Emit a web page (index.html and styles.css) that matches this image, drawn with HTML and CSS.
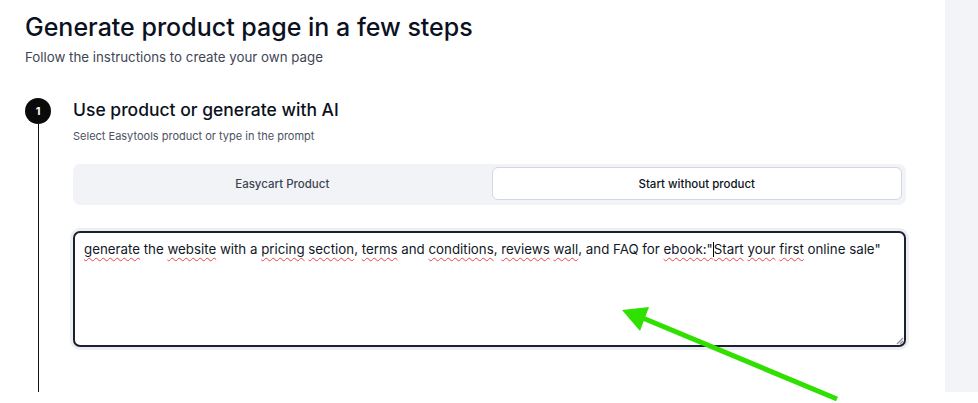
FILE: index.html
```html
<!DOCTYPE html>
<html lang="en">
<head>
<meta charset="utf-8">
<title>Generate product page</title>
<link rel="stylesheet" href="styles.css">
</head>
<body>
<div class="page">
  <main class="main">
    <h1 class="title">Generate product page in a few steps</h1>
    <p class="subtitle">Follow the instructions to create your own page</p>
    <section class="step">
      <div class="rail">
        <div class="badge">1</div>
        <div class="line"></div>
      </div>
      <div class="step-body">
        <h2 class="step-title">Use product or generate with AI</h2>
        <p class="step-sub">Select Easytools product or type in the prompt</p>
        <div class="tabs">
          <div class="tab">Easycart Product</div>
          <div class="tab active">Start without product</div>
        </div>
        <div class="prompt">
          <div class="prompt-text"><span class="sp">generate</span> the <span class="sp">website</span> with a <span class="sp">pricing</span> <span class="sp">section</span>, <span class="sp">terms</span> and <span class="sp">conditions</span>, <span class="sp">reviews</span> <span class="sp">wall</span>, and FAQ for <span class="sp">ebook:"</span><span class="caret"></span><span class="sp">Start</span> <span class="sp">your</span> <span class="sp">first</span> online sale"</div>
          <svg class="grip" width="10" height="10" viewBox="0 0 10 10"><path d="M9 3 L3 9 M9 6 L6 9" stroke="#8a8f98" stroke-width="1.2" fill="none"/></svg>
        </div>
      </div>
    </section>
  </main>
  <aside class="side"></aside>
</div>
<svg class="arrow" width="978" height="403" viewBox="0 0 978 403">
  <line x1="837" y1="399" x2="638" y2="316" stroke="#2fe000" stroke-width="5" stroke-linecap="butt"/>
  <polygon points="622,310 649,307 640,331" fill="#2fe000"/>
</svg>
</body>
</html>
```

FILE: styles.css
```css
* { box-sizing: border-box; }
html, body { margin: 0; padding: 0; background: #ffffff; }
body {
  font-family: Inter, "Noto Sans", sans-serif;
  color: #0d1321;
  width: 978px;
  height: 403px;
  overflow: hidden;
  position: relative;
}
.page {
  display: flex;
  height: 392px;
}
.main {
  flex: 1;
  display: flex;
  flex-direction: column;
  padding: 11px 39px 0 25px;
}
.title {
  margin: 0;
  font-size: 25px;
  line-height: 32px;
  font-weight: 500;
  color: #0b1120;
}
.subtitle {
  margin: 5px 0 0 0;
  font-size: 13.3px;
  line-height: 18px;
  color: #3f4654;
}
.step {
  flex: 1;
  display: flex;
  margin-top: 32px;
}
.rail {
  width: 48px;
  display: flex;
  flex-direction: column;
  align-items: flex-start;
}
.badge {
  width: 26px;
  height: 26px;
  border-radius: 50%;
  background: #0a0a0a;
  color: #ffffff;
  font-size: 11px;
  font-weight: 700;
  display: flex;
  align-items: center;
  justify-content: center;
}
.line {
  flex: 1;
  width: 1px;
  background: #111111;
  margin-left: 13px;
}
.step-body {
  flex: 1;
  display: flex;
  flex-direction: column;
}
.step-title {
  margin: 1px 0 0 0;
  font-size: 17.5px;
  line-height: 22px;
  font-weight: 500;
  color: #0b1120;
}
.step-sub {
  margin: 8px 0 0 0;
  font-size: 11px;
  line-height: 14px;
  color: #4b5261;
}
.tabs {
  margin-top: 21px;
  display: grid;
  grid-template-columns: 1fr 1fr;
  gap: 4px;
  padding: 3px 4px 5px 4px;
  background: #f2f3f7;
  border-radius: 7px;
}
.tab {
  height: 33px;
  display: flex;
  align-items: center;
  justify-content: center;
  font-size: 11.5px;
  font-weight: 500;
  color: #3d4452;
  border-radius: 6px;
  border: 1px solid transparent;
}
.tab.active {
  background: #ffffff;
  border-color: #d3d7e0;
  color: #0d1321;
}
.prompt {
  position: relative;
  margin-top: 26px;
  height: 116px;
  border: 2px solid #1c2130;
  border-radius: 7px;
  box-shadow: 0 0 0 3px #eceef2;
  padding: 7px 9px;
  background: #ffffff;
}
.prompt-text {
  font-size: 13.3px;
  line-height: 19px;
  color: #111827;
  white-space: nowrap;
}
.sp {
  text-decoration: underline wavy #ef4444;
  text-decoration-thickness: 1px;
  text-underline-offset: 3px;
}
.caret {
  display: inline-block;
  width: 1px;
  height: 15px;
  background: #000000;
  vertical-align: -3px;
}
.grip {
  position: absolute;
  right: 0;
  bottom: 0;
}
.side {
  width: 33px;
  background: #f3f4f8;
}
.arrow {
  position: absolute;
  left: 0;
  top: 0;
  pointer-events: none;
}
```
